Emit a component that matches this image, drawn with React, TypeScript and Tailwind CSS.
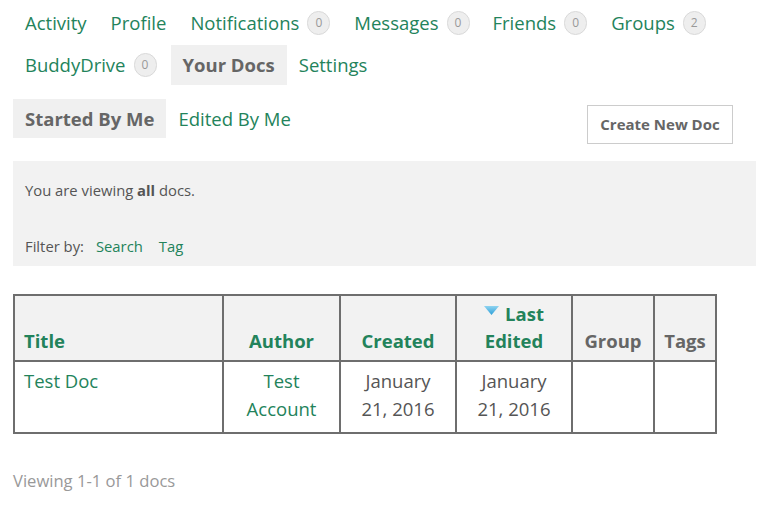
import React from "react";

const G = "text-[#23835b]";

function Badge({ n }: { n: number }) {
  return (
    <span className="ml-[8px] inline-flex h-[24px] w-[23px] items-center justify-center rounded-full border border-[#d9d9d9] bg-[#eeeeee] text-[12px] leading-none text-[#999] align-middle">
      {n}
    </span>
  );
}

export default function App() {
  const font = { fontFamily: '"Open Sans", "Noto Sans", sans-serif' };
  return (
    <div className="w-[768px] h-[510px] bg-white text-[#555]" style={font}>
      <div className="px-[13px] pt-[3px]">
        <div className="flex flex-wrap items-center text-[18.5px] leading-[40px]">
          <a className={`${G} px-[12px]`}>Activity</a>
          <a className={`${G} px-[12px]`}>Profile</a>
          <a className={`${G} px-[12px] flex items-center`}>Notifications<Badge n={0} /></a>
          <a className={`${G} pl-[12px] pr-[11px] flex items-center`}>Messages<Badge n={0} /></a>
          <a className={`${G} px-[12px] flex items-center`}>Friends<Badge n={0} /></a>
          <a className={`${G} px-[12px] flex items-center`}>Groups<Badge n={2} /></a>
        </div>
        <div className="flex items-center text-[18.5px] leading-[40px] mt-[2px]">
          <a className={`${G} px-[12px] flex items-center`}>BuddyDrive<Badge n={0} /></a>
          <a className="ml-[2px] px-[12px] bg-[#f0f0f0] font-bold text-[#666]">Your Docs</a>
          <a className={`${G} px-[12px]`}>Settings</a>
        </div>
      </div>

      <div className="px-[13px] mt-[14px] flex items-start justify-between">
        <div className="flex text-[18.5px] leading-[39px]">
          <span className="px-[12px] bg-[#f0f0f0] font-bold text-[#666]">Started By Me</span>
          <span className={`${G} px-[12px]`}>Edited By Me</span>
        </div>
        <button className="mt-[6px] mr-[22px] h-[39px] w-[146px] border border-[#cccccc] bg-white text-[15px] font-bold text-[#666]">
          Create New Doc
        </button>
      </div>

      <div className="mx-[13px] mt-[17px] w-[743px] h-[105px] bg-[#f2f2f2] px-[12px] text-[14.8px] text-[#555]">
        <p className="pt-[18px] leading-[22px]">
          You are viewing <b className="text-[#555]">all</b> docs.
        </p>
        <p className="mt-[34px] leading-[22px] flex">
          <span>Filter by:</span>
          <span className={`${G} ml-[12px]`}>Search</span>
          <span className={`${G} ml-[16px]`}>Tag</span>
        </p>
      </div>

      <table className="ml-[13px] mt-[28px] border-collapse text-[18.5px]">
        <thead>
          <tr className="bg-[#f2f2f2] align-bottom">
            <th className={`w-[209px] border-2 border-[#6e6e6e] px-[9px] pb-[6px] text-left font-bold ${G}`}>
              <div className="h-[27px] leading-[27px]">Title</div>
            </th>
            <th className={`w-[117px] border-2 border-[#6e6e6e] pb-[6px] font-bold ${G}`}>
              <div className="h-[27px] leading-[27px]">Author</div>
            </th>
            <th className={`w-[116px] border-2 border-[#6e6e6e] pb-[6px] font-bold ${G}`}>
              <div className="h-[27px] leading-[27px]">Created</div>
            </th>
            <th className={`w-[116px] border-2 border-[#6e6e6e] pb-[6px] pt-[4px] font-bold ${G}`}>
              <div className="h-[27px] leading-[27px] flex items-center justify-center">
                <svg width="15" height="9" viewBox="0 0 15 9" className="mr-[6px] -mt-[6px]">
                  <defs>
                    <linearGradient id="tg" x1="0" y1="0" x2="0" y2="1">
                      <stop offset="0" stopColor="#8fd3f0" />
                      <stop offset="1" stopColor="#2b9fd8" />
                    </linearGradient>
                  </defs>
                  <polygon points="0,0 15,0 7.5,9" fill="url(#tg)" />
                </svg>
                Last
              </div>
              <div className="h-[27px] leading-[27px]">Edited</div>
            </th>
            <th className="w-[82px] border-2 border-[#6e6e6e] pb-[6px] font-bold text-[#666]">
              <div className="h-[27px] leading-[27px]">Group</div>
            </th>
            <th className="w-[62px] border-2 border-[#6e6e6e] pb-[6px] font-bold text-[#666]">
              <div className="h-[27px] leading-[27px]">Tags</div>
            </th>
          </tr>
        </thead>
        <tbody>
          <tr className="h-[72px] align-top leading-[28px]">
            <td className={`border-2 border-[#6e6e6e] px-[9px] pt-[5px] ${G}`}>Test Doc</td>
            <td className={`border-2 border-[#6e6e6e] pt-[5px] text-center ${G}`}>Test<br />Account</td>
            <td className="border-2 border-[#6e6e6e] pt-[5px] text-center text-[#555]">January<br />21, 2016</td>
            <td className="border-2 border-[#6e6e6e] pt-[5px] text-center text-[#555]">January<br />21, 2016</td>
            <td className="border-2 border-[#6e6e6e]"></td>
            <td className="border-2 border-[#6e6e6e]"></td>
          </tr>
        </tbody>
      </table>

      <p className="ml-[13px] mt-[35px] text-[16.6px] text-[#999]">Viewing 1-1 of 1 docs</p>
    </div>
  );
}
